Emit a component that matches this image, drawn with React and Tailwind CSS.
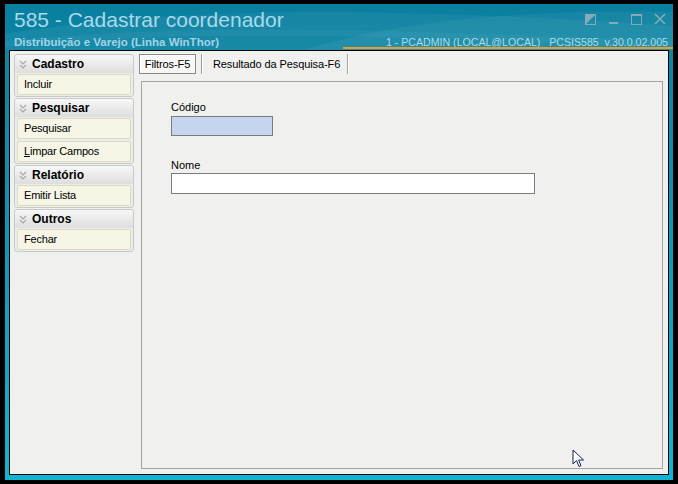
import React from "react";

function Chevron() {
  return (
    <svg width="8" height="9" viewBox="0 0 8 9" className="shrink-0">
      <path d="M1 1 L4 4 L7 1 M1 5 L4 8 L7 5" fill="none" stroke="#a8a8a8" strokeWidth="1.2" />
    </svg>
  );
}

function Group({ title, items }) {
  return (
    <div className="w-[120px] rounded-[3px] border border-[#c9c9c9] bg-[#ececea] pb-[1px]">
      <div className="flex h-[18px] items-center gap-[5px] rounded-t-[3px] bg-gradient-to-b from-[#f7f7f7] to-[#dedede] pl-[4px]">
        <Chevron />
        <span className="text-[12px] font-bold leading-none text-black">{title}</span>
      </div>
      <div className="mt-[1px] flex flex-col gap-[2px] px-[2px]">
        {items.map((it) => (
          <div
            key={it.label}
            className="flex h-[21px] items-center rounded-[2px] border border-[#dcdac0] bg-[#f6f5e6] pl-[6px] text-[11px] leading-none tracking-[-0.2px] text-black"
          >
            {it.u ? (
              <span>
                <span className="underline">{it.label[0]}</span>
                {it.label.slice(1)}
              </span>
            ) : (
              it.label
            )}
          </div>
        ))}
      </div>
    </div>
  );
}

export default function App() {
  return (
    <div
      className="relative h-[484px] w-[678px] overflow-hidden bg-black px-[5px] py-[4px]"
      style={{ fontFamily: '"Liberation Sans", Arial, sans-serif' }}
    >
      <div className="relative flex h-[476px] w-[668px] flex-col bg-gradient-to-b from-[#0a7f9f] via-[#0f98b8] to-[#12b4d3]">
        <svg className="pointer-events-none absolute left-0 top-0" width="668" height="46" viewBox="0 0 668 46">
          <path d="M0 30 C 150 5, 350 0, 668 22 L668 46 L0 46 Z" fill="#ffffff" opacity="0.05" />
          <path d="M300 46 C 380 20, 500 5, 668 8 L668 46 Z" fill="#ffffff" opacity="0.05" />
          <path d="M0 40 C 200 20, 420 30, 668 40" fill="none" stroke="#ffffff" strokeWidth="6" opacity="0.04" />
        </svg>
        {/* header */}
        <div className="relative h-[46px] w-full">
          <div className="absolute left-[9px] top-[3px] text-[21px] leading-[25px] text-[#a9d9ea]">
            585 - Cadastrar coordenador
          </div>
          <div className="absolute left-[9px] top-[32px] text-[11.5px] font-bold leading-[13px] text-[#a2d3e4]">
            Distribuição e Varejo (Linha WinThor)
          </div>
          <div className="absolute right-[5px] top-[32px] whitespace-pre text-[10.6px] leading-[13px] text-[#a8dbea]">
            {"1 - PCADMIN (LOCAL@LOCAL)   PCSIS585  v.30.0.02.005"}
          </div>
          <div className="absolute left-[338px] right-0 top-[43px] h-[2px] bg-[#f39a1e]" />
          <div className="absolute right-[7px] top-[9px] flex items-center gap-[12px]">
            <svg width="11" height="11" viewBox="0 0 11 11">
              <rect x="0.5" y="0.5" width="10" height="10" fill="none" stroke="#86aab7" />
              <path d="M0 0 L11 0 L0 11 Z" fill="#86aab7" />
            </svg>
            <svg width="11" height="11" viewBox="0 0 11 11">
              <rect x="1" y="8" width="9" height="2" fill="#86aab7" />
            </svg>
            <svg width="11" height="11" viewBox="0 0 11 11">
              <rect x="0.5" y="0.5" width="10" height="10" fill="none" stroke="#86aab7" />
              <rect x="0" y="0" width="11" height="2" fill="#86aab7" />
            </svg>
            <svg width="12" height="12" viewBox="0 0 12 12">
              <path d="M1 1 L11 11 M11 1 L1 11" stroke="#86aab7" strokeWidth="1.6" />
            </svg>
          </div>
        </div>
        {/* content */}
        <div className="mx-[4px] h-[425px] w-[660px] border border-black bg-[#f0f0ee]">
          <div className="flex h-full pl-[4px] pr-[5px] pt-[3px] pb-[5px]">
            <div className="flex w-[120px] flex-col gap-[1px]">
              <Group title="Cadastro" items={[{ label: "Incluir" }]} />
              <Group title="Pesquisar" items={[{ label: "Pesquisar" }, { label: "Limpar Campos", u: true }]} />
              <Group title="Relatório" items={[{ label: "Emitir Lista" }]} />
              <Group title="Outros" items={[{ label: "Fechar" }]} />
            </div>
            <div className="ml-[5px] flex flex-1 flex-col">
              <div className="flex h-[20px] items-stretch text-[11px] leading-none tracking-[-0.1px] text-black">
                <div className="flex w-[57px] items-center justify-center border border-[#8a8a8a] bg-[#f7f7f5] shadow-[inset_1px_1px_0_#ffffff]">
                  Filtros-F5
                </div>
                <div className="ml-[5px] w-[1px] bg-[#a0a0a0]" />
                <div className="w-[1px] bg-white" />
                <div className="flex w-[144px] items-center pl-[10px]">Resultado da Pesquisa-F6</div>
                <div className="w-[1px] bg-[#a0a0a0]" />
                <div className="w-[1px] bg-white" />
              </div>
              <div className="ml-[2px] mt-[7px] flex-1 border border-[#a3a3a3] bg-[#f0f0ee] pl-[29px] pt-[18px]">
                <div className="text-[11px] leading-[14px] text-black">Código</div>
                <div className="mt-[2px] h-[20px] w-[102px] border border-[#7c7c7c] bg-[#c6d5ee]" />
                <div className="mt-[22px] text-[11px] leading-[14px] text-black">Nome</div>
                <div className="mt-[1px] h-[21px] w-[364px] border border-[#7c7c7c] bg-white" />
              </div>
            </div>
          </div>
        </div>
      </div>
      <svg className="absolute left-[572px] top-[449px]" width="14" height="21" viewBox="0 0 14 21">
        <path d="M1 1 L1 15 L4.5 11.5 L7 17.5 L9 16.7 L6.6 11 L11.5 11 Z" fill="#ffffff" stroke="#1a1f5c" strokeWidth="1" strokeLinejoin="miter" />
      </svg>
    </div>
  );
}
